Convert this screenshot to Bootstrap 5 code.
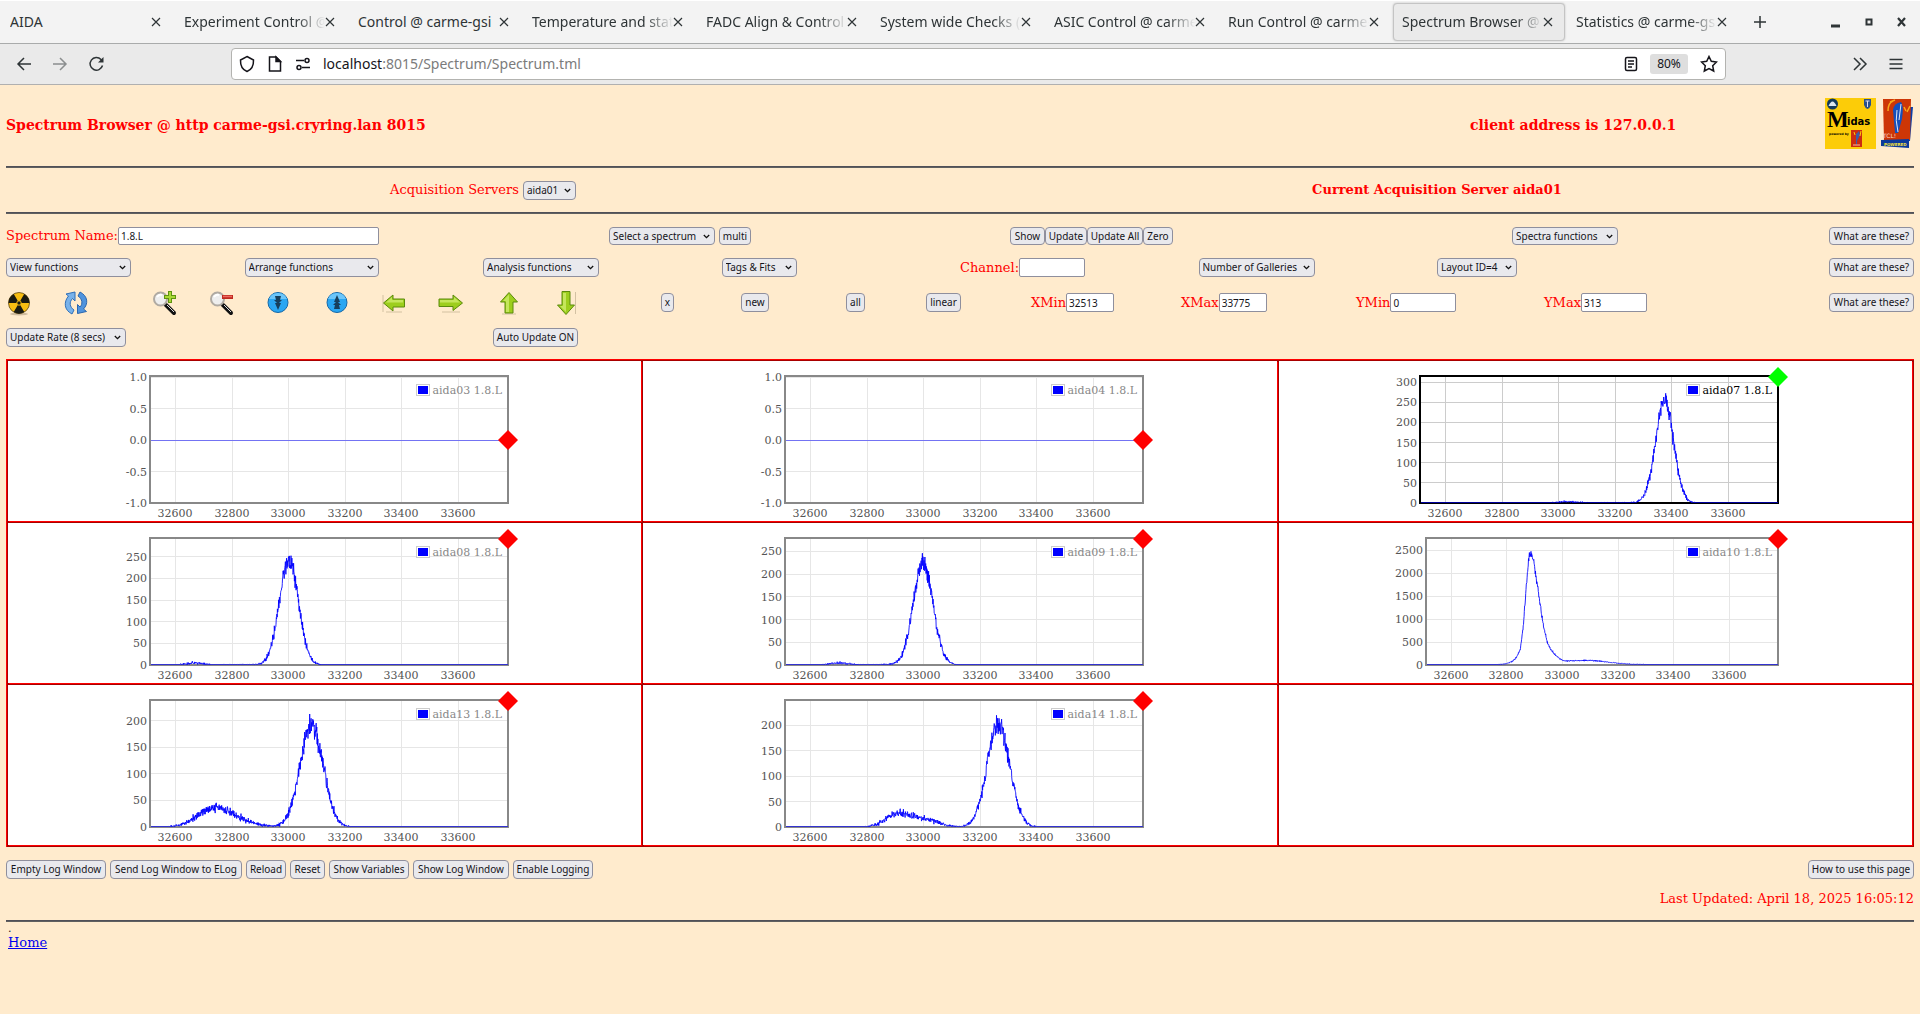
<!DOCTYPE html>
<html lang="en">
<head>
<meta charset="utf-8">
<meta name="viewport" content="width=device-width, initial-scale=1">
<title>Spectrum Browser @ carme-gsi</title>
<link href="https://cdn.jsdelivr.net/npm/bootstrap@5.3.0/dist/css/bootstrap.min.css" rel="stylesheet">
<style>
body{background:#ffebcd;font-family:"DejaVu Serif",serif;font-size:13px;line-height:16px;color:red}
button{font-family:inherit}
/* browser chrome */
.chrome{font-family:"Noto Sans",sans-serif;font-size:14px;line-height:20px;color:#2e3436}
.tabstrip{height:44px;background:#f3f3f3;border-top:1px solid #fff;border-bottom:1px solid #a9abab}
.tabitem{flex:0 1 174px;min-width:0;height:38px;margin-top:2px;padding:0 13px 0 10px;border:0;background:none;color:inherit}
.tabitem.current{flex-basis:172px;margin-left:1px;margin-right:1px;padding:0 11px 0 8px;background:#eaeaea;border:1px solid #c4c4c4;border-radius:4px;box-shadow:0 0 2px #bbb}
.tabtitle{flex:1;white-space:nowrap;overflow:hidden;text-align:left;line-height:24px;-webkit-mask-image:linear-gradient(to left,transparent 0,#000 28px);mask-image:linear-gradient(to left,transparent 0,#000 28px)}
.tabitem.fits .tabtitle{-webkit-mask-image:none;mask-image:none}
.chrome svg{fill:none;stroke:#2e3436;stroke-width:1.5;flex:none}
.toolstrip{height:41px;background:#eaeaea;border-bottom:1px solid #b0b0b0;padding:0 16px}
.navset{gap:20px}
.toolbtn{border:0;background:none;padding:0;display:flex;color:inherit}
.urlbox{height:32px;margin:0 122px 0 126px;background:#fff;border:1px solid #b3b3b0;border-radius:4px;padding:0 7px;gap:12px}
.urlbox svg{stroke:#15141a}
.urltext{color:#7b7b7b;white-space:nowrap}
.urltext b{font-weight:400;color:#15141a}
.zoombadge{background:#dedede;border:0;border-radius:3px;width:38px;height:20px;font-size:12px;line-height:20px;padding:0;color:#15141a}
/* page */
.page{padding:13px 6px 0}
.titletext{font-size:14px;font-weight:700;line-height:20px;margin:0}
.rule{height:2px;margin:0;opacity:1;border:0;background:#606060;border-top:1px solid #505058}
.frow{display:grid;align-items:center;justify-items:start}
.frow>:last-child.endcell{justify-self:end}
.head{grid-template-columns:1464fr 355fr auto;height:54px;margin-bottom:14px}
.servers{height:44px}
.r1{grid-template-columns:603fr 401fr 502fr 402fr;margin-top:13px;height:18px}
.r2{grid-template-columns:repeat(8,1fr);margin-top:13px;height:19px}
.r3{grid-template-columns:57fr 89fr 57fr 56fr 59fr 57fr 57fr 58fr 57fr 108fr 80fr 105fr 80fr 105fr 150fr 175fr 188fr 370fr;margin-top:12px;height:27px}
.r4{grid-template-columns:487fr 1421fr;margin-top:12px;height:19px}
.r3>*{min-width:0}
.r3 .d-flex,.r3 .pbtn{margin-right:-80px}
.pbtn,.psel,.pinput{font-family:"Noto Sans",sans-serif;font-size:10px;line-height:15px;height:19px;border:1px solid #8f8f9d;color:#15141a}
.pbtn{background:#e9e9ed;border-radius:4px;padding:0;text-align:center;white-space:nowrap}
.psel{appearance:none;border-radius:4px;padding:0 14px 0 3px;background:#e9e9ed url("data:image/svg+xml,%3Csvg xmlns='http://www.w3.org/2000/svg' width='7' height='5'%3E%3Cpath d='M.8 1l2.7 2.7L6.2 1' fill='none' stroke='%23111' stroke-width='1.3'/%3E%3C/svg%3E") no-repeat right 4px center}
.pinput{background:#fff;border-radius:2px;padding:0 2px}
.r1 .pbtn,.r1 .psel,.r1 .pinput{height:18px}
.w13{width:13px}.w19{width:19px}.w28{width:28px}.w30{width:30px}.w32{width:32px}.w35{width:35px}.w40{width:40px}.w42{width:42px}.w48{width:48px}.w53{width:53px}.w56{width:56px}.w66{width:66px}.w75{width:75px}.w80{width:80px}.w85{width:85px}.w96{width:96px}.w100{width:100px}.w106{width:106px}.w116{width:116px}.w120{width:120px}.w125{width:125px}.w132{width:132px}.w134{width:134px}.w261{width:261px}
.icobtn{border:0;background:none;padding:0;width:26px;height:26px;display:block}
.icobtn svg{display:block}
.gallery{display:grid;grid-template-columns:repeat(3,1fr);gap:2px;padding:2px;margin-top:12px;background:#a80000;box-shadow:inset 1px 1px #f00}
.plotcell{background:#fff;height:160px;box-shadow:1px 1px #f00}
.plotcell svg{display:block;margin:0 auto;overflow:visible;font-size:11px}
.actions{margin-top:13px}
.updated{margin:12px 0 13px}
.dotline{line-height:12px;font-size:11px}
.homelink{color:#0000ee;text-decoration:underline}
.pagefoot{padding:1px 2px}
</style>
<script src="https://cdn.jsdelivr.net/npm/bootstrap@5.3.0/dist/js/bootstrap.bundle.min.js"></script>
</head>
<body>
<header class="chrome">
  <div class="tabstrip d-flex">
    <div class="d-flex flex-grow-1" id="tabs"></div>
    <div class="d-flex align-items-center pe-2">
      <button class="toolbtn" aria-label="Minimise"><svg width="34" height="20"><path d="M13 14h9" style="stroke-width:3"/></svg></button>
      <button class="toolbtn me-1" aria-label="Maximise"><svg width="34" height="20"><rect x="14.500" y="7.500" width="5" height="5" style="stroke-width:2"/></svg></button>
      <button class="toolbtn" aria-label="Close window"><svg width="22" height="20"><path d="M8 6l7 8M15 6l-7 8" style="stroke-width:2.200"/></svg></button>
    </div>
  </div>
  <nav class="toolstrip d-flex align-items-center" aria-label="Navigation">
    <div class="navset d-flex">
    <button class="toolbtn" aria-label="Back"><svg width="16" height="16"><path d="M15 8H2M8 2L2 8l6 6"/></svg></button>
    <button class="toolbtn opacity-50" aria-label="Forward"><svg width="16" height="16"><path d="M1 8h13M8 2l6 6-6 6"/></svg></button>
    <button class="toolbtn" aria-label="Reload"><svg width="17" height="16"><path d="M14.500 9.500A6.300 6.300 0 1 1 13 3.500l1.500 1.500"/><path d="M15.500 1v5.500H10z" style="fill:#2e3436;stroke:none"/></svg></button>
    </div>
    <div class="urlbox d-flex align-items-center flex-grow-1">
      <svg width="16" height="18"><path d="M8 1.500L14.500 5c.2 5-1.500 9.500-6.500 11.500C3 14.500 1.300 10 1.500 5z"/></svg>
      <svg width="16" height="18"><path d="M2.500 2h6.500l4.500 4.500V16h-11z"/><path d="M9 2v4.500h4.500z" style="fill:#15141a"/></svg>
      <svg width="16" height="18"><path d="M1 5.500h8M7 12.500h8"/><circle cx="12" cy="5.500" r="2"/><circle cx="4" cy="12.500" r="2"/></svg>
      <span class="urltext flex-grow-1"><b>localhost</b>:8015/Spectrum/Spectrum.tml</span>
      <button class="toolbtn" aria-label="Reader view"><svg width="14" height="16"><rect x="1.500" y="1.500" width="11" height="13" rx="1.500"/><path d="M4 5h6M4 8h6M4 11h4" style="stroke-width:1.300"/></svg></button>
      <button class="zoombadge">80%</button>
      <button class="toolbtn" aria-label="Bookmark"><svg width="18" height="18"><path d="M9 1.500l2.300 4.800 5.200.7-3.800 3.700 1 5.300L9 13.500 4.300 16l1-5.300L1.500 7l5.200-.7z"/></svg></button>
    </div>
    <button class="toolbtn ms-1 me-3" aria-label="More tools"><svg width="16" height="16"><path d="M2 2l6 6-6 6M8 2l6 6-6 6"/></svg></button>
    <button class="toolbtn ms-1" aria-label="Menu"><svg width="16" height="16"><path d="M1.500 3.500h13M1.500 8h13M1.500 12.500h13"/></svg></button>
  </nav>
</header>

<main class="page">
  <div class="frow head">
    <h1 class="titletext">Spectrum Browser @ http carme-gsi.cryring.lan 8015</h1>
    <h2 class="titletext">client address is 127.0.0.1</h2>
    <div class="d-flex align-self-start">
      <svg width="51" height="51" viewBox="0 0 51 51" role="img" aria-label="Midas">
        <rect width="51" height="51" fill="#fccc08"/><circle cx="7.500" cy="6" r="5.500" fill="#123a5c"/><path d="M3.500 8q4-9 8 0z" fill="#dce6ee"/>
        <path d="M39 1h7v6q-1 3-3.500 4Q40 10 39 7z" fill="#28508c"/><path d="M40.500 3h4M42.500 3v6" stroke="#dde" fill="none"/>
        <text x="2" y="29" font-family="Liberation Serif" font-weight="700" font-size="23" fill="#000">M</text>
        <text x="22" y="27" font-family="DejaVu Sans" font-weight="700" font-size="10" fill="#000">idas</text>
        <text x="4" y="37" font-family="DejaVu Sans" font-weight="700" font-size="3" fill="#000">powered by</text>
        <rect x="26" y="32" width="11" height="17" fill="#cc2b10"/><path d="M31 46V36l3-3 1 4-3 6v4" fill="#3d59a8"/><path d="M29 34l1 3M36 33l-1 5" stroke="#fccc08" fill="none"/><path d="M28 47h7" stroke="#f4b9a0"/>
      </svg>
      <svg class="ms-1" width="34" height="51" viewBox="0 0 34 51" role="img" aria-label="Tcl powered">
        <path d="M28 9l5 0-3 34h-4z" fill="#0d3fa8"/><path d="M3 1l28 0-1 41-26 1z" fill="#cd3606"/><path d="M1 42l28-1v9L1 48z" fill="#0c3a9b"/>
        <path d="M13 12q1-7 8-8 3 3 1 17l-4 14h-3z" fill="#1550bd"/><path d="M17 12q-2 10 1 22M21 6l-2 16" stroke="#dfe6f5" fill="none"/>
        <path d="M8 13q0-8 5-10M10 4l5-2M24 9l2 4M30 8l-3 6" stroke="#f7a81c" stroke-width="1.500" fill="none"/>
        <text x="3" y="40" font-family="DejaVu Sans" font-size="6" fill="#f8d8c8">TCL!</text>
        <text x="4" y="48" font-family="DejaVu Sans" font-weight="700" font-size="4" fill="#f6e33a">POWERED</text>
      </svg>
    </div>
  </div>
  <hr class="rule">
  <div class="row g-0 text-center align-items-center servers">
    <div class="col-6"><div class="d-flex justify-content-center align-items-center gap-1"><label for="srv">Acquisition Servers</label><select class="psel w53" id="srv"><option>aida01</option></select></div></div>
    <div class="col-6"><strong>Current Acquisition Server aida01</strong></div>
  </div>
  <hr class="rule">

  <div class="frow r1">
    <div class="d-flex align-items-center"><label for="sn">Spectrum Name:</label><input class="pinput w261" id="sn" value="1.8.L"></div>
    <div class="d-flex gap-1"><select class="psel w106" aria-label="Select a spectrum"><option>Select a spectrum</option></select><button class="pbtn w32">multi</button></div>
    <div class="d-flex"><button class="pbtn w35">Show</button><button class="pbtn w42">Update</button><button class="pbtn w56">Update All</button><button class="pbtn w30">Zero</button></div>
    <div class="d-flex justify-content-between w-100"><select class="psel w106" aria-label="Spectra functions"><option>Spectra functions</option></select><button class="pbtn w85">What are these?</button></div>
  </div>
  <div class="frow r2">
    <select class="psel w125" aria-label="View functions"><option>View functions</option></select>
    <select class="psel w134" aria-label="Arrange functions"><option>Arrange functions</option></select>
    <select class="psel w116" aria-label="Analysis functions"><option>Analysis functions</option></select>
    <select class="psel w75" aria-label="Tags and fits"><option>Tags &amp; Fits</option></select>
    <div class="d-flex align-items-center"><label for="ch">Channel:</label><input class="pinput w66" id="ch"></div>
    <select class="psel w116" aria-label="Number of galleries"><option>Number of Galleries</option></select>
    <select class="psel w80" aria-label="Layout"><option>Layout ID=4</option></select>
    <button class="pbtn w85 endcell">What are these?</button>
  </div>
  <div class="frow r3">
    <button class="icobtn" aria-label="Clear"><svg width="26" height="26"><ellipse cx="13" cy="24" rx="9" ry="1.500" fill="#a08c70" opacity=".5"/><circle cx="13" cy="13" r="10.500" fill="#f8bd12" stroke="#5a4510" stroke-width=".8"/><path d="M13 13H2.500A10.500 10.500 0 0 1 7.800 3.900zM13 13h10.500a10.500 10.500 0 0 0-5.300-9.100zM13 13l-5.300 9.100a10.500 10.500 0 0 0 10.600 0z" fill="#1a1a12"/><circle cx="13" cy="13" r="2.200" fill="#1a1a12" stroke="#f8bd12"/></svg></button>
    <button class="icobtn" aria-label="Refresh"><svg width="26" height="26"><path d="M9 24C1 20 .5 12 5.500 6L3 4l9-2v9L9.500 8.500C6 12 6.500 17 11 20z" fill="#79b2ea" stroke="#2f6fb8"/><path d="M17 2c8 4 8.500 12 3.500 17l3 2.500-9 2v-9l2.500 2.500C20 14 19.500 9 15 6z" fill="#4f93dd" stroke="#2a66ae"/></svg></button>
    <button class="icobtn" aria-label="Zoom in"><svg width="26" height="26"><path d="M14 15l8 8" stroke="#111" stroke-width="4" stroke-linecap="round"/><path d="M15 15l7 7" stroke="#ddd"/><circle cx="8.500" cy="9" r="6.500" fill="#eee" stroke="#b0aaa2" stroke-width="2"/><path d="M5 7q2-3 5-2" stroke="#fff" stroke-width="2" fill="none"/><path d="M18 1v12M12 7h12" stroke="#5f9410" stroke-width="4"/><path d="M18 2v10M13 7h10" stroke="#a9d836" stroke-width="2"/></svg></button>
    <button class="icobtn" aria-label="Zoom out"><svg width="26" height="26"><path d="M14 15l8 8" stroke="#111" stroke-width="4" stroke-linecap="round"/><path d="M15 15l7 7" stroke="#ddd"/><circle cx="8.500" cy="9" r="6.500" fill="#eee" stroke="#b0aaa2" stroke-width="2"/><path d="M5 7q2-3 5-2" stroke="#fff" stroke-width="2" fill="none"/><path d="M13 7h11" stroke="#c02a20" stroke-width="4"/><path d="M14 6.500h9" stroke="#ee6a60" stroke-width="1.500"/></svg></button>
    <button class="icobtn" aria-label="Scale down"><svg width="26" height="26"><circle cx="13" cy="12.500" r="10" fill="#2aa6f2" stroke="#1467a8"/><path d="M4 9a9.500 9 0 0 1 18 0" fill="#6cc6fa"/><path d="M10 6h6l-1 4h2l-4 4-4-4h2zM10 13h6l-3 7z" fill="#173f5c"/></svg></button>
    <button class="icobtn" aria-label="Scale up"><svg width="26" height="26"><circle cx="13" cy="12.500" r="10" fill="#2aa6f2" stroke="#1467a8"/><path d="M4 9a9.500 9 0 0 1 18 0" fill="#6cc6fa"/><path d="M10 12h6l-3-7zM10 19h6l-1-4h2l-4-4-4 4h2z" fill="#173f5c"/></svg></button>
    <button class="icobtn" aria-label="Left"><svg width="26" height="26"><path d="M2 5v17M5 22h16" stroke="#a89878" opacity=".5"/><path d="M2.500 13L12 5v4h11.500v8H12v4z" fill="#9dce1d" stroke="#5b8a0d"/><path d="M5 12.500L11 7v3h11v2.500z" fill="#c5e65c"/></svg></button>
    <button class="icobtn" aria-label="Right"><svg width="26" height="26"><path d="M4 22h18" stroke="#a89878" opacity=".5"/><path d="M24.500 13L15 5v4H1v7.500h14v4z" fill="#9dce1d" stroke="#5b8a0d"/><path d="M22 12.500L16 7v3H2v2.500z" fill="#c5e65c"/></svg></button>
    <button class="icobtn" aria-label="Up"><svg width="26" height="26"><path d="M6 24h14" stroke="#a89878" opacity=".5"/><path d="M13 2.500L21.500 12H17v11H9V12H4.500z" fill="#9dce1d" stroke="#5b8a0d"/><path d="M13 4.500V22h-3V11H7z" fill="#c5e65c"/></svg></button>
    <button class="icobtn" aria-label="Down"><svg width="26" height="26"><path d="M22.500 2v22" stroke="#a89878" opacity=".5"/><path d="M13 24.500L21.500 15H17V1.500H9V15H4.500z" fill="#9dce1d" stroke="#5b8a0d"/><path d="M13 22V3h-3v13H7z" fill="#c5e65c"/></svg></button>
    <button class="pbtn w13">x</button>
    <button class="pbtn w28">new</button>
    <button class="pbtn w19">all</button>
    <button class="pbtn w35">linear</button>
    <div class="d-flex align-items-center"><label for="x0">XMin</label><input class="pinput w48" id="x0" value="32513"></div>
    <div class="d-flex align-items-center"><label for="x1">XMax</label><input class="pinput w48" id="x1" value="33775"></div>
    <div class="d-flex align-items-center"><label for="y0">YMin</label><input class="pinput w66" id="y0" value="0"></div>
    <div class="d-flex align-items-center justify-content-between w-100 me-0"><div class="d-flex align-items-center me-0"><label for="y1">YMax</label><input class="pinput w66" id="y1" value="313"></div><button class="pbtn w85 me-0">What are these?</button></div>
  </div>
  <div class="frow r4">
    <select class="psel w120" aria-label="Update rate"><option>Update Rate (8 secs)</option></select>
    <button class="pbtn w85">Auto Update ON</button>
  </div>

  <section class="gallery" id="gallery" aria-label="Spectra"></section>

  <div class="d-flex gap-1 actions">
    <button class="pbtn w100">Empty Log Window</button>
    <button class="pbtn w132">Send Log Window to ELog</button>
    <button class="pbtn w40">Reload</button>
    <button class="pbtn w35">Reset</button>
    <button class="pbtn w80">Show Variables</button>
    <button class="pbtn w96">Show Log Window</button>
    <button class="pbtn w80">Enable Logging</button>
    <button class="pbtn w106 ms-auto">How to use this page</button>
  </div>
  <div class="text-end updated">Last Updated: April 18, 2025 16:05:12</div>
  <hr class="rule">
  <footer class="pagefoot"><div class="text-dark dotline">.</div><a class="homelink" href="#">Home</a></footer>
</main>

<script>
const tabNames = ["AIDA","Experiment Control @","Control @ carme-gsi","Temperature and stat","FADC Align & Control","System wide Checks (","ASIC Control @ carme","Run Control @ carme-","Spectrum Browser @","Statistics @ carme-gs"];
const cross = '<svg width="10" height="10"><path d="M1 1l8 8M9 1l-8 8" style="stroke-width:1.200"/></svg>';
document.getElementById("tabs").innerHTML = tabNames.map((t, i) =>
  `<button class="tabitem d-flex align-items-center ${i === 8 ? "current" : ""} ${i === 0 || i === 2 ? "fits" : ""}"><span class="tabtitle">${t.replace("&", "&amp;")}</span>${cross}</button>`).join("") +
  '<button class="toolbtn align-items-center ms-2 ps-1" aria-label="New tab"><svg width="16" height="16"><path d="M8 2v12M2 8h12"/></svg></button>';

const X0 = 32513, X1 = 33775, TOP = 16, BOTTOM = 142, RIGHT = 384;
let seed = 20250418;
const rnd = () => (seed = (seed * 1664525 + 1013904223) % 4294967296) / 4294967296;
const noise = () => (rnd() + rnd() + rnd() + rnd() - 2) * 1.7;
const gauss = (x, a, m, s) => a * Math.exp(-((x - m) ** 2) / (2 * s * s));
const peaks = list => x => list.reduce((t, p) => t + gauss(x, ...p), 0);
const curve = [[32513,0],[32760,4],[32800,30],[32822,90],[32834,160],[32848,330],[32854,600],[32860,900],[32864,1260],[32870,1700],[32876,2140],[32882,2440],[32890,2400],[32897,2240],[32904,1950],[32915,1550],[32923,1190],[32932,830],[32944,530],[32957,350],[32973,220],[32995,120],[33010,85],[33080,100],[33127,92],[33156,70],[33200,40],[33259,15],[33330,5],[33775,0]];
const lerp = x => {
  let i = 1;
  while (i < curve.length - 1 && curve[i][0] < x) i++;
  const [a, b] = [curve[i - 1], curve[i]];
  return a[1] + (b[1] - a[1]) * (x - a[0]) / (b[0] - a[0]);
};
const spectra = [
  {name:"aida03", flat:true},
  {name:"aida04", flat:true},
  {name:"aida07", max:313, step:50, f:peaks([[253,33374,32],[3,33030,35],[1,33200,80]]), active:true},
  {name:"aida08", max:291, step:50, f:peaks([[238,33000,34],[5,32670,30],[1,32830,60]])},
  {name:"aida09", max:277, step:50, f:peaks([[222,32998,35],[4,32700,35],[1,32850,60]])},
  {name:"aida10", max:2750, step:500, f:lerp, left:33},
  {name:"aida13", max:237, step:50, f:peaks([[190,33081,41],[37,32742,60],[5,32860,50]])},
  {name:"aida14", max:248, step:50, f:peaks([[203,33264,40],[26,32907,42],[15,33005,46]])}
];
function draw(s) {
  const left = s.left || 27, w = RIGHT - left, h = BOTTOM - TOP;
  const px = x => left + (x - X0) * w / (X1 - X0);
  const lo = s.flat ? -1 : 0, hi = s.flat ? 1 : s.max;
  const py = y => BOTTOM - (y - lo) * h / (hi - lo);
  const grey = s.active ? "#000" : "#888", grid = s.active ? "#ccc" : "#e6e6e6";
  let g = "", t = "";
  for (let x = 32600; x <= 33600; x += 200) {
    g += `M${Math.floor(px(x)) + .5} ${TOP}V${BOTTOM}`;
    t += `<text x="${Math.floor(px(x))}" y="156" text-anchor="middle">${x}</text>`;
  }
  for (let y = lo; y <= hi; y += s.flat ? .5 : s.step) {
    g += `M${left} ${Math.floor(py(y)) + .5}H${RIGHT}`;
    t += `<text x="${left - 4}" y="${Math.round(py(y)) + 4}" text-anchor="end">${s.flat ? y.toFixed(1) : y}</text>`;
  }
  let d = s.flat ? `M${left} ${py(0) + .5}H${RIGHT}` : "";
  if (!s.flat) for (let x = X0; x <= X1; x += 1) {
    const m = s.f(x), v = Math.max(0, m + noise() * Math.sqrt(m) * (m < 1 ? .4 : .75));
    d += (d ? "L" : "M") + px(x).toFixed(1) + " " + Math.min(BOTTOM - .5, py(v)).toFixed(1);
  }
  const dy = s.flat ? 79 : TOP;
  return `<svg width="402" height="160" role="img" aria-label="${s.name} spectrum"><path d="${g}" stroke="${grid}" fill="none"/><rect x="${left - 1}" y="${TOP - 1}" width="${w + 1}" height="${h + 1}" fill="none" stroke="${grey}" stroke-width="2"/>
  <path d="${d}" fill="none" stroke="#00f" stroke-opacity="${s.flat ? .5 : .85}" stroke-width="1"/>
  <g fill="#545454">${t}</g><rect x="292.500" y="23.500" width="13" height="11" fill="#fff" stroke="#ccc"/><rect x="294" y="25" width="10" height="8" fill="#00f"/>
  <text x="378" y="33" text-anchor="end" fill="${s.active ? "#000" : "#888"}">${s.name} 1.8.L</text>
  <path d="M${RIGHT} ${dy - 10}l10 10-10 10-10-10z" fill="${s.active ? "#0f0" : "#f00"}"/></svg>`;
}
document.getElementById("gallery").innerHTML = spectra.map(s => `<div class="plotcell">${draw(s)}</div>`).join("") + '<div class="plotcell"></div>';
</script>
</body>
</html>
